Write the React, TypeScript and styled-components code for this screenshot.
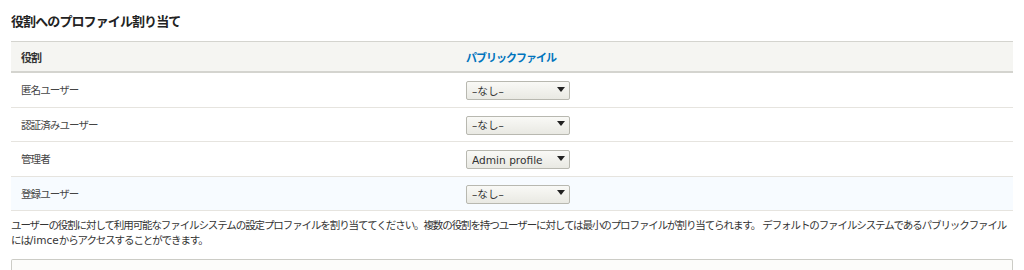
import React from 'react';
import styled, { createGlobalStyle } from 'styled-components';

const GlobalStyle = createGlobalStyle`
  body {
    margin: 0;
    background: #fff;
    color: #333;
    font-family: "DejaVu Sans", "Noto Sans CJK JP", sans-serif;
  }
`;

const Page = styled.div`
  padding: 14px 11px 0;
`;

const Title = styled.h4`
  margin: 0 0 11px;
  font-size: 13px;
  line-height: 16px;
  font-weight: bold;
  letter-spacing: -0.9px;
  color: #222;
`;

const Table = styled.div`
  width: 1002px;
  border-top: 1px solid #d4d4cf;
`;

const HeadRow = styled.div`
  display: grid;
  grid-template-columns: 455px 1fr;
  height: 31px;
  box-sizing: border-box;
  align-items: center;
  background: #f5f5f2;
  border-bottom: 2px solid #d4d4cf;
`;

const HeadCell = styled.div<{ $link?: boolean }>`
  padding-left: ${p => (p.$link ? '0' : '10px')};
  font-size: 11px;
  font-weight: bold;
  letter-spacing: -1px;
  color: ${p => (p.$link ? '#0074bd' : '#333')};
`;

const Row = styled.div<{ $hover?: boolean }>`
  display: grid;
  grid-template-columns: 455px 1fr;
  height: 34.5px;
  box-sizing: border-box;
  align-items: center;
  background: ${p => (p.$hover ? '#f7fbff' : '#fff')};
  border-bottom: 1px solid #e6e4df;
`;

const Cell = styled.div`
  padding-left: 10px;
  font-size: 10.5px;
  letter-spacing: -0.9px;
  color: #444;
`;

const SelectWrap = styled.div`
  position: relative;
  width: 104px;
  height: 19px;
  margin-top: -1px;
`;

const Select = styled.select`
  appearance: none;
  width: 100%;
  height: 100%;
  box-sizing: border-box;
  margin: 0;
  padding: 0 0 0 5px;
  border: 1px solid #b8b8b0;
  border-radius: 2px;
  background: linear-gradient(#f9f9f6, #e9e9e3);
  font-family: "DejaVu Sans", "Noto Sans CJK JP", sans-serif;
  font-size: 10.6px;
  color: #333;
  outline: none;
`;

const Arrow = styled.svg`
  position: absolute;
  right: 5px;
  top: 7px;
  pointer-events: none;
`;

const Description = styled.div`
  margin-top: 7px;
  width: 1002px;
  font-size: 10.5px;
  line-height: 15px;
  letter-spacing: -1.1px;
  color: #333;
`;

const Path = styled.span`
  letter-spacing: 0;
`;

const Details = styled.div`
  margin-top: 11px;
  width: 1002px;
  height: 12px;
  box-sizing: border-box;
  border: 1px solid #ccccc6;
  border-bottom: none;
  border-radius: 2px 2px 0 0;
  background: #fcfcfa;
`;

const roles = [
  { name: '匿名ユーザー', value: '–なし–' },
  { name: '認証済みユーザー', value: '–なし–' },
  { name: '管理者', value: 'Admin profile' },
  { name: '登録ユーザー', value: '–なし–', hover: true },
];

function ProfileSelect({ value }: { value: string }) {
  return (
    <SelectWrap>
      <Select defaultValue={value}>
        <option>–なし–</option>
        <option>Admin profile</option>
      </Select>
      <Arrow width="8" height="5" viewBox="0 0 8 5">
        <path d="M0 0 H8 L4 5 Z" fill="#222" />
      </Arrow>
    </SelectWrap>
  );
}

export default function App() {
  return (
    <Page>
      <GlobalStyle />
      <Title>役割へのプロファイル割り当て</Title>
      <Table>
        <HeadRow>
          <HeadCell>役割</HeadCell>
          <HeadCell $link>パブリックファイル</HeadCell>
        </HeadRow>
        {roles.map(r => (
          <Row key={r.name} $hover={r.hover}>
            <Cell>{r.name}</Cell>
            <ProfileSelect value={r.value} />
          </Row>
        ))}
      </Table>
      <Description>
        ユーザーの役割に対して利用可能なファイルシステムの設定プロファイルを割り当ててください。複数の役割を持つユーザーに対しては最小のプロファイルが割り当てられます。 デフォルトのファイルシステムであるパブリックファイルには<Path>/imce</Path>からアクセスすることができます。
      </Description>
      <Details />
    </Page>
  );
}
